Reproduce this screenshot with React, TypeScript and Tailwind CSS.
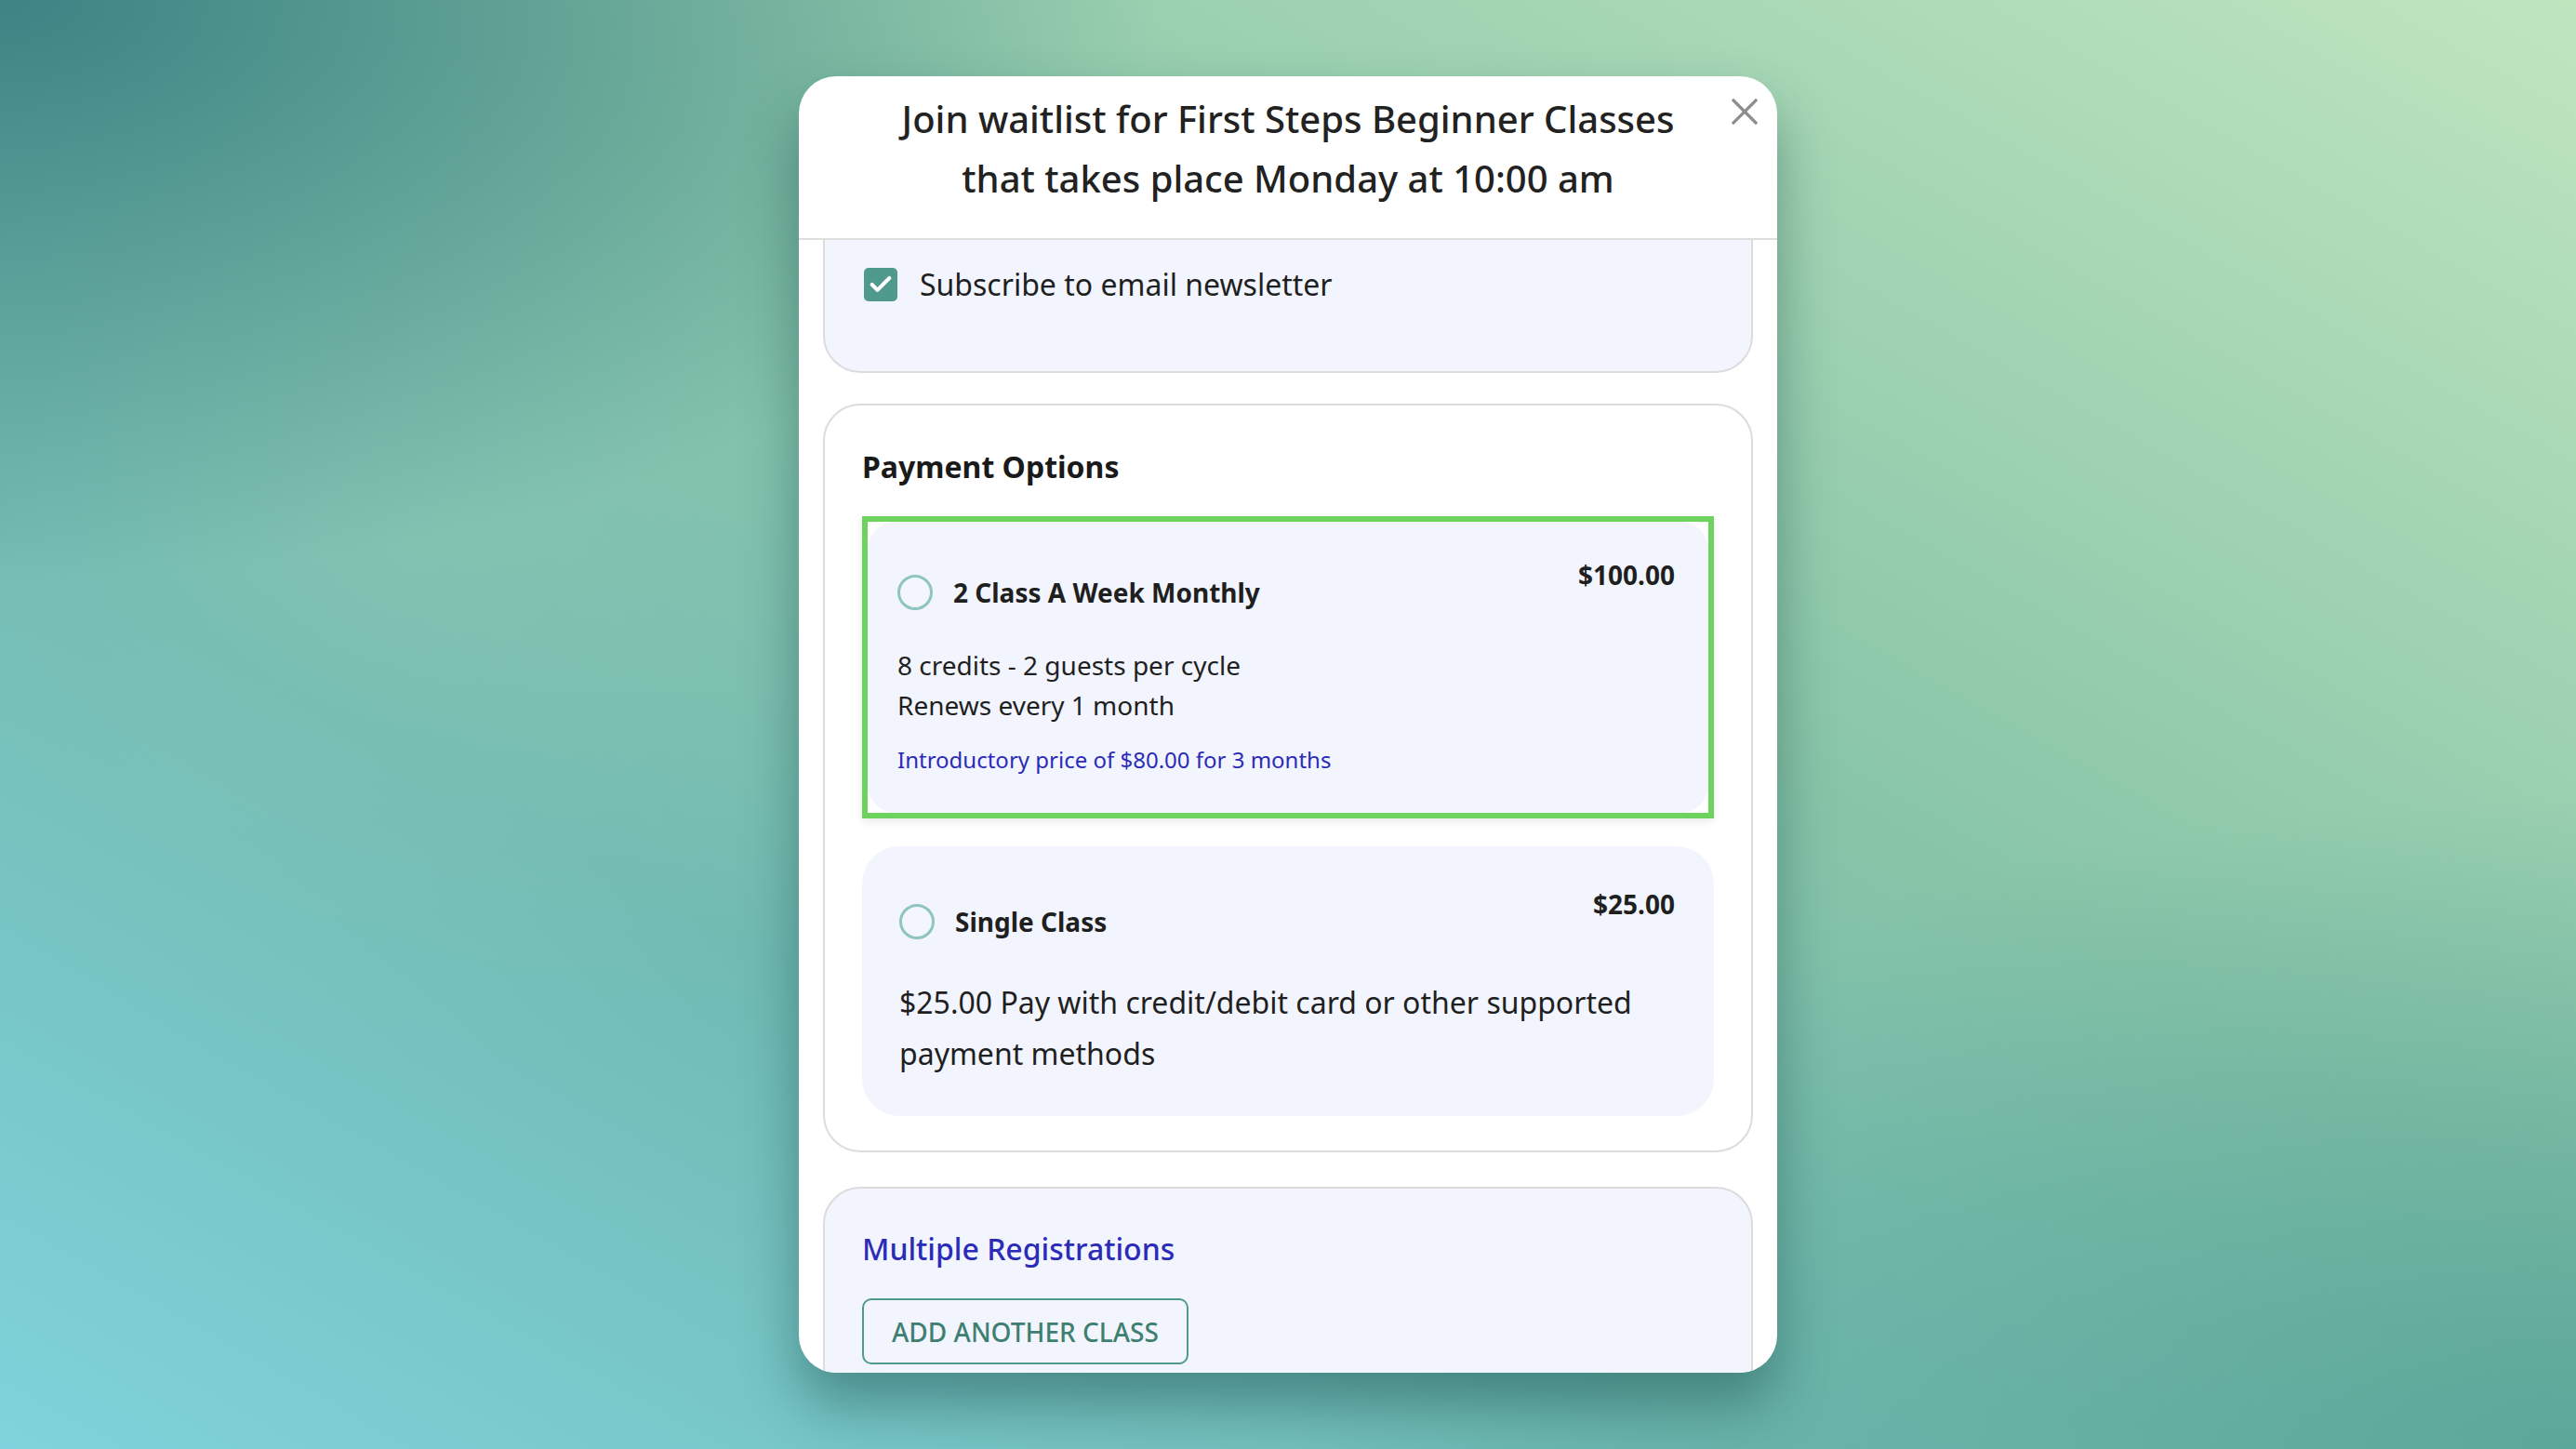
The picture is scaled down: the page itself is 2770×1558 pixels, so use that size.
import { Check } from 'lucide-react'

const font = { fontFamily: '"Noto Sans", "Open Sans", sans-serif' }

function Radio() {
  return <span className="block h-[38px] w-[38px] flex-shrink-0 rounded-full border-[3px] border-[#8fc4bf] bg-[#f3f6fd]" />
}

function OptionHead({ title, price }: { title: string; price: string }) {
  return (
    <div className="flex items-start justify-between">
      <div className="flex items-center gap-[22px] pt-[19px]">
        <Radio />
        <span className="text-[28px] font-bold leading-[38px] text-[#1f1f1f]">{title}</span>
      </div>
      <span className="text-[28px] font-bold leading-[38px] text-[#1f1f1f]">{price}</span>
    </div>
  )
}

export default function App() {
  return (
    <div
      style={font}
      className="flex h-screen w-full items-center justify-center bg-[radial-gradient(ellipse_45%_40%_at_0%_0%,rgba(58,128,130,0.95),rgba(58,128,130,0)_100%),radial-gradient(ellipse_50%_45%_at_100%_100%,rgba(82,160,150,0.8),rgba(82,160,150,0)_100%),radial-gradient(ellipse_26%_36%_at_16%_38%,rgba(150,205,180,0.35),rgba(150,205,180,0)_100%),linear-gradient(to_top_right,#80d3dc_0%,#70bab3_32%,#88c5a8_58%,#bfe5bf_100%)]"
    >
      <div className="flex h-[1394px] w-[1052px] flex-col overflow-hidden rounded-[40px] bg-white shadow-[0_34px_60px_rgba(20,70,70,0.45)]">
        {/* header */}
        <div className="relative flex-shrink-0 border-b-2 border-[#dedede] px-[90px] pt-[14px] pb-[32px]">
          <h2 className="text-center text-[40px] font-medium leading-[64px] text-[#222]">
            Join waitlist for First Steps Beginner Classes that takes place Monday at 10:00 am
          </h2>
          <button className="absolute right-[20px] top-[23px] text-[#8d8d8d]">
            <svg width="30" height="30" viewBox="0 0 30 30" fill="none" stroke="currentColor" strokeWidth="3.2" strokeLinecap="square">
              <path d="M3 3 L27 27 M27 3 L3 27" />
            </svg>
          </button>
        </div>

        {/* scrolled body */}
        <div className="flex-1 overflow-hidden px-[26px]">
          <div className="-mt-[44px] flex flex-col">
            <div className="rounded-[40px] border-2 border-[#dcdcdc] bg-[#f2f5fe] px-[42px] pt-[68px] pb-[71px]">
              <label className="flex items-center gap-[24px]">
                <span className="flex h-[36px] w-[36px] items-center justify-center rounded-[5px] bg-[#4f9a8c]">
                  <Check size={28} strokeWidth={3.5} className="text-white" />
                </span>
                <span className="text-[32px] leading-[44px] text-[#1f1f1f]">Subscribe to email newsletter</span>
              </label>
            </div>

            <div className="mt-[33px] rounded-[40px] border-2 border-[#dcdcdc] bg-white px-[40px] pt-[44px] pb-[37px]">
              <h3 className="text-[32px] font-bold leading-[44px] text-[#1a1a1a]">Payment Options</h3>

              <div className="mt-[31px] border-[6px] border-[#6dd35f] bg-white shadow-[0_4px_8px_rgba(0,0,0,0.08)]">
                <div className="rounded-[30px] bg-[#f2f5fe] pl-[32px] pr-[36px] pt-[38px] pb-[40px]">
                  <OptionHead title="2 Class A Week Monthly" price="$100.00" />
                  <div className="mt-[38px] text-[28px] leading-[43px] text-[#1f1f1f]">
                    <p>8 credits - 2 guests per cycle</p>
                    <p>Renews every 1 month</p>
                  </div>
                  <p className="mt-[20px] text-[24px] leading-[34px] text-[#2b2bb8]">
                    Introductory price of $80.00 for 3 months
                  </p>
                </div>
              </div>

              <div className="mt-[30px] rounded-[40px] bg-[#f2f5fe] pl-[40px] pr-[42px] pt-[43px] pb-[40px]">
                <OptionHead title="Single Class" price="$25.00" />
                <p className="mt-[40px] pr-[20px] text-[32px] leading-[55px] text-[#1f1f1f]">
                  $25.00 Pay with credit/debit card or other supported payment methods
                </p>
              </div>
            </div>

            <div className="mt-[37px] rounded-[40px] border-2 border-[#dcdcdc] bg-[#f2f5fe] px-[40px] pt-[43px] pb-[60px]">
              <h3 className="text-[32px] font-medium leading-[44px] text-[#2b2bb8]">Multiple Registrations</h3>
              <button className="mt-[31px] h-[71px] rounded-[10px] border-2 border-[#4f9a8c] px-[30px] text-[28px] font-medium text-[#3f7f72]">
                ADD ANOTHER CLASS
              </button>
            </div>
          </div>
        </div>
      </div>
    </div>
  )
}
